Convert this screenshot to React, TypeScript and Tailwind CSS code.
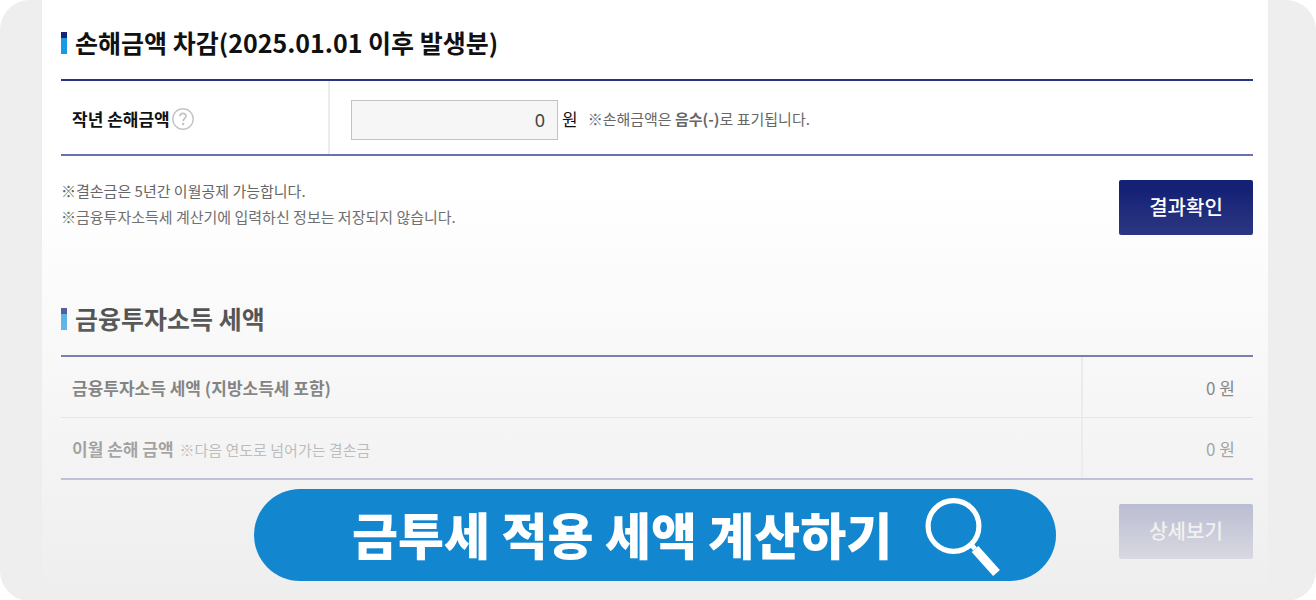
import type { ReactNode } from 'react';

function SectionTitle({ children }: { children: ReactNode }) {
  return (
    <h2 className="flex items-center gap-2 text-[25px] leading-9 font-bold text-[#111]">
      <span className="flex h-[22px] w-[6px] flex-col" aria-hidden="true">
        <span className="h-[6px] bg-[#172378]" />
        <span className="grow bg-[#1a9ae0]" />
      </span>
      <span className="pb-0.5">{children}</span>
    </h2>
  );
}

function ActionButton({ children }: { children: ReactNode }) {
  return (
    <button
      type="button"
      className="h-[55px] w-[134px] shrink-0 rounded-xs bg-[#152175] pb-0.5 text-[20px] leading-[30px] font-medium text-white"
    >
      {children}
    </button>
  );
}

function HelpButton() {
  return (
    <button type="button" aria-label="도움말" className="block">
      <svg width="22" height="22" viewBox="0 0 22 22" fill="none" stroke="#c4c4c4">
        <circle cx="11" cy="11" r="10.2" strokeWidth="1.4" />
        <path d="M8 8.3C8 6.5 9.2 5.4 11 5.4s3 1.1 3 2.7c0 2.3-2.9 2.6-2.9 5.2" strokeWidth="1.8" />
        <circle cx="11.1" cy="16" r="1.2" fill="#c4c4c4" stroke="none" />
      </svg>
    </button>
  );
}

const results = [
  { label: '금융투자소득 세액 (지방소득세 포함)', note: '', value: '0 원' },
  { label: '이월 손해 금액', note: '※다음 연도로 넘어가는 결손금', value: '0 원' },
];

export default function App() {
  return (
    <div className="min-h-screen bg-white font-['Noto_Sans_CJK_KR',sans-serif]">
      <div className="flex min-h-screen rounded-[30px] bg-[#eeeeee] pr-12 pl-[42px]">
        <main className="relative grow bg-white pt-6 pr-[15px] pl-[19px]">
          <section>
            <SectionTitle>손해금액 차감(2025.01.01 이후 발생분)</SectionTitle>
            <table className="mt-[17px] w-full border-separate border-spacing-0 border-t-2 border-b-2 border-t-[#2a3582] border-b-[#6a72ae]">
              <tbody>
                <tr>
                  <th className="h-[73px] w-[269px] border-r-2 border-[#ececec] pt-0.5 pl-[11px] text-left">
                    <div className="flex items-center gap-0.5">
                      <label htmlFor="loss" className="text-[17px] leading-6 font-bold text-[#111]">
                        작년 손해금액
                      </label>
                      <HelpButton />
                    </div>
                  </th>
                  <td className="pt-1 pl-[21px]">
                    <div className="flex items-center">
                      <input
                        id="loss"
                        type="text"
                        readOnly
                        defaultValue="0"
                        className="h-10 w-[207px] border border-[#c2c2c2] bg-[#f6f6f6] px-3 text-right font-['Noto_Sans',sans-serif] text-[18px] text-[#444]"
                      />
                      <span className="ml-1 pb-0.5 text-[17px] leading-6 text-[#111]">원</span>
                      <span className="ml-2.5 pb-0.5 text-[15px] leading-6 text-[#666]">
                        ※손해금액은 <b>음수(-)</b>로 표기됩니다.
                      </span>
                    </div>
                  </td>
                </tr>
              </tbody>
            </table>
            <div className="flex items-start justify-between pt-6">
              <div className="-mt-0.5 text-[15px] leading-[26px] text-[#666]">
                <p>※결손금은 5년간 이월공제 가능합니다.</p>
                <p>※금융투자소득세 계산기에 입력하신 정보는 저장되지 않습니다.</p>
              </div>
              <ActionButton>결과확인</ActionButton>
            </div>
          </section>

          <section className="pt-[65px]">
            <SectionTitle>금융투자소득 세액</SectionTitle>
            <table className="mt-[17px] w-full border-separate border-spacing-0 border-t-2 border-b-2 border-t-[#2a3582] border-b-[#4a54a4] text-[17px] leading-6">
              <tbody>
                {results.map((row) => (
                  <tr key={row.label} className="group">
                    <th className="h-[61px] border-r-2 border-b border-r-[#e8e8e8] border-b-[#dcdcdc] pt-0.5 pl-[11px] text-left font-bold text-[#222] group-last:h-[60px] group-last:border-b-0">
                      {row.label}
                      {row.note && <span className="ml-1.5 text-[15px] font-normal text-[#666]">{row.note}</span>}
                    </th>
                    <td className="w-[170px] border-b border-b-[#dcdcdc] pt-0.5 pr-[18px] text-right text-[#222] group-last:border-b-0">
                      {row.value}
                    </td>
                  </tr>
                ))}
              </tbody>
            </table>
            <div className="flex justify-end pt-6 pb-[42px]">
              <ActionButton>상세보기</ActionButton>
            </div>
          </section>

          <div className="pointer-events-none absolute inset-x-0 top-[190px] bottom-0 bg-linear-to-b from-[#eeeeee]/0 to-[#eeeeee]" />

          <div className="absolute inset-x-0 bottom-5 flex justify-center">
            <button
              type="button"
              className="flex h-[92px] w-[802px] items-center rounded-full bg-[#1287d0] pl-[98px] text-[50px] leading-[74px] font-black text-white"
            >
              <span className="pb-1">금투세 적용 세액 계산하기</span>
              <svg className="mt-1 ml-8" width="78" height="82" viewBox="0 0 78 82" fill="none" stroke="white" aria-hidden="true">
                <circle cx="29.5" cy="30" r="25.4" strokeWidth="5.2" />
                <path d="M46 47l5 6" strokeWidth="5" />
                <path d="M51 53L72.5 77" strokeWidth="9" />
              </svg>
            </button>
          </div>
        </main>
      </div>
    </div>
  );
}
